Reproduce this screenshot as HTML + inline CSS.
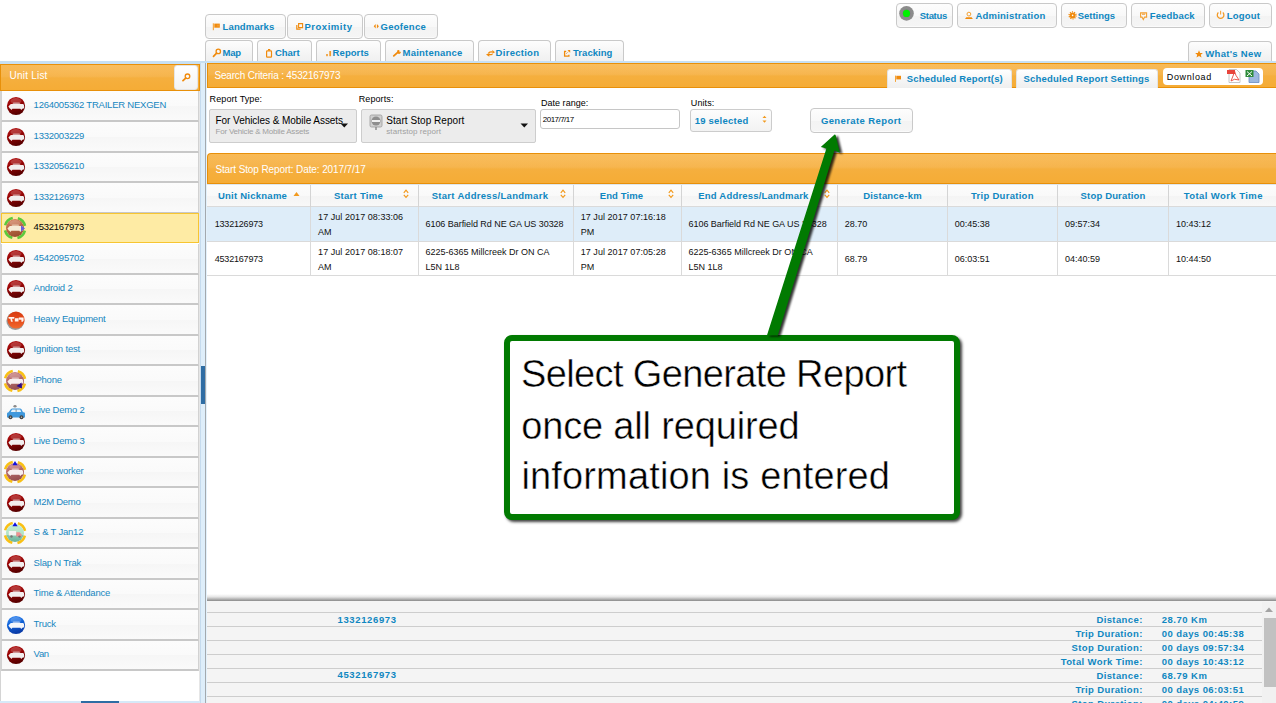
<!DOCTYPE html>
<html><head><meta charset="utf-8"><title>Reports</title>
<style>
html,body{margin:0;padding:0;}
body{width:1276px;height:703px;overflow:hidden;position:relative;background:#fff;font-family:"Liberation Sans",sans-serif;}
.a{position:absolute;}
.t{position:absolute;white-space:pre;}
</style></head><body>
<div class="a" style="left:205.0px;top:14.0px;width:81.0px;height:25.0px;border:1px solid #c9c9c9;border-radius:4px;background:linear-gradient(#fdfdfd,#f8f8f8 50%,#f3f3f3 51%,#f5f5f5);box-shadow:inset 0 -1px 0 #fbfbfb;box-sizing:border-box;"></div>
<span class="t" style="left:222.6px;top:22px;font-size:9.5px;line-height:9.5px;font-weight:bold;color:#0f87c1;letter-spacing:0.13px;">Landmarks</span>
<div class="a" style="left:287.0px;top:14.0px;width:76.0px;height:25.0px;border:1px solid #c9c9c9;border-radius:4px;background:linear-gradient(#fdfdfd,#f8f8f8 50%,#f3f3f3 51%,#f5f5f5);box-shadow:inset 0 -1px 0 #fbfbfb;box-sizing:border-box;"></div>
<span class="t" style="left:304.4px;top:22px;font-size:9.5px;line-height:9.5px;font-weight:bold;color:#0f87c1;letter-spacing:0.54px;">Proximity</span>
<div class="a" style="left:364.0px;top:14.0px;width:74.0px;height:25.0px;border:1px solid #c9c9c9;border-radius:4px;background:linear-gradient(#fdfdfd,#f8f8f8 50%,#f3f3f3 51%,#f5f5f5);box-shadow:inset 0 -1px 0 #fbfbfb;box-sizing:border-box;"></div>
<span class="t" style="left:380.6px;top:22px;font-size:9.5px;line-height:9.5px;font-weight:bold;color:#0f87c1;letter-spacing:0.26px;">Geofence</span>
<div class="a" style="left:205.0px;top:40.0px;width:48.0px;height:21.0px;border:1px solid #c9c9c9;border-bottom:none;border-radius:4px 4px 0 0;background:linear-gradient(#fdfdfd,#f6f6f6 50%,#f0f0f0);box-sizing:border-box;"></div>
<span class="t" style="left:222.6px;top:48px;font-size:9.5px;line-height:9.5px;font-weight:bold;color:#0f87c1;letter-spacing:-0.29px;">Map</span>
<div class="a" style="left:257.0px;top:40.0px;width:55.0px;height:21.0px;border:1px solid #c9c9c9;border-bottom:none;border-radius:4px 4px 0 0;background:linear-gradient(#fdfdfd,#f6f6f6 50%,#f0f0f0);box-sizing:border-box;"></div>
<span class="t" style="left:274.9px;top:48px;font-size:9.5px;line-height:9.5px;font-weight:bold;color:#0f87c1;letter-spacing:0.00px;">Chart</span>
<div class="a" style="left:316.0px;top:40.0px;width:65.0px;height:21.0px;border:1px solid #c9c9c9;border-bottom:none;border-radius:4px 4px 0 0;background:linear-gradient(#fdfdfd,#f6f6f6 50%,#f0f0f0);box-sizing:border-box;"></div>
<span class="t" style="left:332.6px;top:48px;font-size:9.5px;line-height:9.5px;font-weight:bold;color:#0f87c1;letter-spacing:0.07px;">Reports</span>
<div class="a" style="left:385.0px;top:40.0px;width:89.0px;height:21.0px;border:1px solid #c9c9c9;border-bottom:none;border-radius:4px 4px 0 0;background:linear-gradient(#fdfdfd,#f6f6f6 50%,#f0f0f0);box-sizing:border-box;"></div>
<span class="t" style="left:402.5px;top:48px;font-size:9.5px;line-height:9.5px;font-weight:bold;color:#0f87c1;letter-spacing:0.22px;">Maintenance</span>
<div class="a" style="left:478.0px;top:40.0px;width:73.0px;height:21.0px;border:1px solid #c9c9c9;border-bottom:none;border-radius:4px 4px 0 0;background:linear-gradient(#fdfdfd,#f6f6f6 50%,#f0f0f0);box-sizing:border-box;"></div>
<span class="t" style="left:495.6px;top:48px;font-size:9.5px;line-height:9.5px;font-weight:bold;color:#0f87c1;letter-spacing:0.28px;">Direction</span>
<div class="a" style="left:555.0px;top:40.0px;width:69.0px;height:21.0px;border:1px solid #c9c9c9;border-bottom:none;border-radius:4px 4px 0 0;background:linear-gradient(#fdfdfd,#f6f6f6 50%,#f0f0f0);box-sizing:border-box;"></div>
<span class="t" style="left:573.0px;top:48px;font-size:9.5px;line-height:9.5px;font-weight:bold;color:#0f87c1;letter-spacing:0.05px;">Tracking</span>
<div class="a" style="left:896.0px;top:3.0px;width:57.0px;height:25.0px;border:1px solid #c9c9c9;border-radius:4px;background:linear-gradient(#fdfdfd,#f8f8f8 50%,#f3f3f3 51%,#f5f5f5);box-shadow:inset 0 -1px 0 #fbfbfb;box-sizing:border-box;"></div>
<span class="t" style="left:919.8px;top:11px;font-size:9.5px;line-height:9.5px;font-weight:bold;color:#0f87c1;letter-spacing:-0.32px;">Status</span>
<div class="a" style="left:957.0px;top:3.0px;width:100.0px;height:25.0px;border:1px solid #c9c9c9;border-radius:4px;background:linear-gradient(#fdfdfd,#f8f8f8 50%,#f3f3f3 51%,#f5f5f5);box-shadow:inset 0 -1px 0 #fbfbfb;box-sizing:border-box;"></div>
<span class="t" style="left:975.4px;top:11px;font-size:9.5px;line-height:9.5px;font-weight:bold;color:#0f87c1;letter-spacing:0.22px;">Administration</span>
<div class="a" style="left:1061.0px;top:3.0px;width:66.0px;height:25.0px;border:1px solid #c9c9c9;border-radius:4px;background:linear-gradient(#fdfdfd,#f8f8f8 50%,#f3f3f3 51%,#f5f5f5);box-shadow:inset 0 -1px 0 #fbfbfb;box-sizing:border-box;"></div>
<span class="t" style="left:1077.8px;top:11px;font-size:9.5px;line-height:9.5px;font-weight:bold;color:#0f87c1;letter-spacing:-0.04px;">Settings</span>
<div class="a" style="left:1131.0px;top:3.0px;width:74.0px;height:25.0px;border:1px solid #c9c9c9;border-radius:4px;background:linear-gradient(#fdfdfd,#f8f8f8 50%,#f3f3f3 51%,#f5f5f5);box-shadow:inset 0 -1px 0 #fbfbfb;box-sizing:border-box;"></div>
<span class="t" style="left:1149.7px;top:11px;font-size:9.5px;line-height:9.5px;font-weight:bold;color:#0f87c1;letter-spacing:0.16px;">Feedback</span>
<div class="a" style="left:1209.0px;top:3.0px;width:63.0px;height:25.0px;border:1px solid #c9c9c9;border-radius:4px;background:linear-gradient(#fdfdfd,#f8f8f8 50%,#f3f3f3 51%,#f5f5f5);box-shadow:inset 0 -1px 0 #fbfbfb;box-sizing:border-box;"></div>
<span class="t" style="left:1226.8px;top:11px;font-size:9.5px;line-height:9.5px;font-weight:bold;color:#0f87c1;letter-spacing:0.17px;">Logout</span>
<div class="a" style="left:1188.0px;top:41.0px;width:84.0px;height:20.0px;border:1px solid #c9c9c9;border-bottom:none;border-radius:4px 4px 0 0;background:linear-gradient(#fdfdfd,#f6f6f6 50%,#f0f0f0);box-sizing:border-box;"></div>
<span class="t" style="left:1205.3px;top:49px;font-size:9.5px;line-height:9.5px;font-weight:bold;color:#0f87c1;letter-spacing:0.31px;">What's New</span>
<div class="a" style="left:0.0px;top:61.0px;width:1276.0px;height:2.0px;background:#c7e0f3;"></div>
<div class="a" style="left:0.0px;top:64.0px;width:200.0px;height:639.0px;background:#fff;"></div>
<div class="a" style="left:0.0px;top:61.0px;width:200.0px;height:3.0px;background:#c7e0f3;"></div>
<div class="a" style="left:0.0px;top:64.0px;width:200.0px;height:27.0px;background:radial-gradient(ellipse 70% 55% at 50% 0%,rgba(255,205,120,0.35),rgba(255,205,120,0) 100%),linear-gradient(#f7b752 0%,#f6b44c 45%,#f5af3e 52%,#f5ac36 100%);border-top:1px solid #e8900a;border-bottom:1px solid #e8900a;box-sizing:border-box;border-left:1px solid #e8900a;border-right:1px solid #e8900a;"></div>
<span class="t" style="left:9.5px;top:71px;font-size:10px;line-height:10px;font-weight:normal;color:#fff;letter-spacing:0.22px;">Unit List</span>
<div class="a" style="left:174.0px;top:65.0px;width:24.0px;height:25.0px;background:linear-gradient(#ffffff,#f3f3f3);border:1px solid #e5e5e5;border-radius:3px;box-sizing:border-box;"></div>
<div class="a" style="left:0.0px;top:91.0px;width:1.0px;height:612.0px;background:#d4d4d4;"></div>
<div class="a" style="left:198.5px;top:91.0px;width:1.5px;height:612.0px;background:#e6e6e6;"></div>
<div class="a" style="left:1.0px;top:91.0px;width:198.0px;height:31.0px;background:linear-gradient(#fcfcfc,#fafafa 50%,#f6f6f6 51%,#fafafa);border-left:1px solid #d2d2d2;border-right:1px solid #d2d2d2;border-bottom:2px solid #c8c8c8;box-sizing:border-box;"></div>
<span class="t" style="left:33.6px;top:100px;font-size:9.5px;line-height:9.5px;font-weight:normal;color:#1686c0;letter-spacing:-0.23px;">1264005362 TRAILER NEXGEN</span>
<svg class="a" style="left:3px;top:93.00px" width="26" height="26" viewBox="-13 -13 26 26"><circle r="9.1" fill="url(#gr)"/><ellipse cx="0" cy="-5" rx="5.5" ry="3" fill="#fff" opacity="0.18"/><path d="M-7.6 0.6 L-5.2 -1.9 H7 Q8.2 -1.7 8.2 0.4 Q8.2 2.6 7 2.8 H6.3 L5.3 3.9 L4.3 2.8 H-3.6 L-4.6 3.9 L-5.6 2.8 H-6 Z" fill="#f2eeee"/><path d="M-3.6 -1.9 L-2.6 -3.6 H3.4 L4.6 -1.9Z" fill="#f2eeee" opacity="0.55"/></svg>
<div class="a" style="left:1.0px;top:122.0px;width:198.0px;height:31.0px;background:linear-gradient(#fcfcfc,#fafafa 50%,#f6f6f6 51%,#fafafa);border-left:1px solid #d2d2d2;border-right:1px solid #d2d2d2;border-bottom:2px solid #c8c8c8;box-sizing:border-box;"></div>
<span class="t" style="left:33.6px;top:131px;font-size:9.5px;line-height:9.5px;font-weight:normal;color:#1686c0;letter-spacing:-0.23px;">1332003229</span>
<svg class="a" style="left:3px;top:124.00px" width="26" height="26" viewBox="-13 -13 26 26"><circle r="9.1" fill="url(#gr)"/><ellipse cx="0" cy="-5" rx="5.5" ry="3" fill="#fff" opacity="0.18"/><path d="M-7.6 0.6 L-5.2 -1.9 H7 Q8.2 -1.7 8.2 0.4 Q8.2 2.6 7 2.8 H6.3 L5.3 3.9 L4.3 2.8 H-3.6 L-4.6 3.9 L-5.6 2.8 H-6 Z" fill="#f2eeee"/><path d="M-3.6 -1.9 L-2.6 -3.6 H3.4 L4.6 -1.9Z" fill="#f2eeee" opacity="0.55"/></svg>
<div class="a" style="left:1.0px;top:153.0px;width:198.0px;height:30.0px;background:linear-gradient(#fcfcfc,#fafafa 50%,#f6f6f6 51%,#fafafa);border-left:1px solid #d2d2d2;border-right:1px solid #d2d2d2;border-bottom:2px solid #c8c8c8;box-sizing:border-box;"></div>
<span class="t" style="left:33.6px;top:161px;font-size:9.5px;line-height:9.5px;font-weight:normal;color:#1686c0;letter-spacing:-0.23px;">1332056210</span>
<svg class="a" style="left:3px;top:154.00px" width="26" height="26" viewBox="-13 -13 26 26"><circle r="9.1" fill="url(#gr)"/><ellipse cx="0" cy="-5" rx="5.5" ry="3" fill="#fff" opacity="0.18"/><path d="M-7.6 0.6 L-5.2 -1.9 H7 Q8.2 -1.7 8.2 0.4 Q8.2 2.6 7 2.8 H6.3 L5.3 3.9 L4.3 2.8 H-3.6 L-4.6 3.9 L-5.6 2.8 H-6 Z" fill="#f2eeee"/><path d="M-3.6 -1.9 L-2.6 -3.6 H3.4 L4.6 -1.9Z" fill="#f2eeee" opacity="0.55"/></svg>
<div class="a" style="left:1.0px;top:183.0px;width:198.0px;height:31.0px;background:linear-gradient(#fcfcfc,#fafafa 50%,#f6f6f6 51%,#fafafa);border-left:1px solid #d2d2d2;border-right:1px solid #d2d2d2;border-bottom:2px solid #c8c8c8;box-sizing:border-box;"></div>
<span class="t" style="left:33.6px;top:192px;font-size:9.5px;line-height:9.5px;font-weight:normal;color:#1686c0;letter-spacing:-0.23px;">1332126973</span>
<svg class="a" style="left:3px;top:185.00px" width="26" height="26" viewBox="-13 -13 26 26"><circle r="9.1" fill="url(#gr)"/><ellipse cx="0" cy="-5" rx="5.5" ry="3" fill="#fff" opacity="0.18"/><path d="M-7.6 0.6 L-5.2 -1.9 H7 Q8.2 -1.7 8.2 0.4 Q8.2 2.6 7 2.8 H6.3 L5.3 3.9 L4.3 2.8 H-3.6 L-4.6 3.9 L-5.6 2.8 H-6 Z" fill="#f2eeee"/><path d="M-3.6 -1.9 L-2.6 -3.6 H3.4 L4.6 -1.9Z" fill="#f2eeee" opacity="0.55"/></svg>
<div class="a" style="left:1.0px;top:213.0px;width:198.0px;height:30.0px;background:#feeba4;border:1px solid #f7c531;box-sizing:border-box;"></div>
<span class="t" style="left:33.6px;top:222px;font-size:9.5px;line-height:9.5px;font-weight:normal;color:#000;letter-spacing:-0.23px;">4532167973</span>
<svg class="a" style="left:2.3000000000000007px;top:215.00px" width="26" height="26" viewBox="-13 -13 26 26"><circle r="10.2" fill="none" stroke="#5cc93c" stroke-width="2.6" stroke-dasharray="10.8 5.22" stroke-dashoffset="13.4"/><circle r="9" fill="url(#gs)"/><ellipse cx="0" cy="-5" rx="5.5" ry="3" fill="#fff" opacity="0.18"/><path d="M-7.6 0.6 L-5.2 -1.9 H7 Q8.2 -1.7 8.2 0.4 Q8.2 2.6 7 2.8 H6.3 L5.3 3.9 L4.3 2.8 H-3.6 L-4.6 3.9 L-5.6 2.8 H-6 Z" fill="#f6ecd6"/><path d="M-3.6 -1.9 L-2.6 -3.6 H3.4 L4.6 -1.9Z" fill="#f6ecd6" opacity="0.55"/><path d="M6 -2.8 L10 0.5 L6 3.5Z" fill="#6a5ce0"/></svg>
<div class="a" style="left:1.0px;top:244.0px;width:198.0px;height:31.0px;background:linear-gradient(#fcfcfc,#fafafa 50%,#f6f6f6 51%,#fafafa);border-left:1px solid #d2d2d2;border-right:1px solid #d2d2d2;border-bottom:2px solid #c8c8c8;box-sizing:border-box;"></div>
<span class="t" style="left:33.6px;top:253px;font-size:9.5px;line-height:9.5px;font-weight:normal;color:#1686c0;letter-spacing:-0.23px;">4542095702</span>
<svg class="a" style="left:3px;top:246.00px" width="26" height="26" viewBox="-13 -13 26 26"><circle r="9.1" fill="url(#gr)"/><ellipse cx="0" cy="-5" rx="5.5" ry="3" fill="#fff" opacity="0.18"/><path d="M-7.6 0.6 L-5.2 -1.9 H7 Q8.2 -1.7 8.2 0.4 Q8.2 2.6 7 2.8 H6.3 L5.3 3.9 L4.3 2.8 H-3.6 L-4.6 3.9 L-5.6 2.8 H-6 Z" fill="#f2eeee"/><path d="M-3.6 -1.9 L-2.6 -3.6 H3.4 L4.6 -1.9Z" fill="#f2eeee" opacity="0.55"/></svg>
<div class="a" style="left:1.0px;top:275.0px;width:198.0px;height:30.0px;background:linear-gradient(#fcfcfc,#fafafa 50%,#f6f6f6 51%,#fafafa);border-left:1px solid #d2d2d2;border-right:1px solid #d2d2d2;border-bottom:2px solid #c8c8c8;box-sizing:border-box;"></div>
<span class="t" style="left:33.6px;top:283px;font-size:9.5px;line-height:9.5px;font-weight:normal;color:#1686c0;letter-spacing:-0.20px;">Android 2</span>
<svg class="a" style="left:3px;top:276.00px" width="26" height="26" viewBox="-13 -13 26 26"><circle r="9.1" fill="url(#gr)"/><ellipse cx="0" cy="-5" rx="5.5" ry="3" fill="#fff" opacity="0.18"/><path d="M-7.6 0.6 L-5.2 -1.9 H7 Q8.2 -1.7 8.2 0.4 Q8.2 2.6 7 2.8 H6.3 L5.3 3.9 L4.3 2.8 H-3.6 L-4.6 3.9 L-5.6 2.8 H-6 Z" fill="#f2eeee"/><path d="M-3.6 -1.9 L-2.6 -3.6 H3.4 L4.6 -1.9Z" fill="#f2eeee" opacity="0.55"/></svg>
<div class="a" style="left:1.0px;top:305.0px;width:198.0px;height:31.0px;background:linear-gradient(#fcfcfc,#fafafa 50%,#f6f6f6 51%,#fafafa);border-left:1px solid #d2d2d2;border-right:1px solid #d2d2d2;border-bottom:2px solid #c8c8c8;box-sizing:border-box;"></div>
<span class="t" style="left:33.6px;top:314px;font-size:9.5px;line-height:9.5px;font-weight:normal;color:#1686c0;letter-spacing:-0.21px;">Heavy Equipment</span>
<svg class="a" style="left:3px;top:307.00px" width="26" height="26" viewBox="-13 -13 26 26"><circle cx="-0.6" cy="0.9" r="9" fill="#3a3a3a" opacity="0.5"/><circle r="8.6" fill="url(#go)"/><path d="M-7.6 -3 H-1.5 L-2 -1.2 H-4 L-3.2 1.8 H-5 L-5.6 -1.2 H-7.2Z M-1.2 -1.8 H2.5 V1.4 H-1.2Z M2.8 -2.6 H7.6 V0.6 L6.8 1.8 H5.4 V-0.2 H2.8Z" fill="#fff3ee"/></svg>
<div class="a" style="left:1.0px;top:336.0px;width:198.0px;height:30.0px;background:linear-gradient(#fcfcfc,#fafafa 50%,#f6f6f6 51%,#fafafa);border-left:1px solid #d2d2d2;border-right:1px solid #d2d2d2;border-bottom:2px solid #c8c8c8;box-sizing:border-box;"></div>
<span class="t" style="left:33.6px;top:344px;font-size:9.5px;line-height:9.5px;font-weight:normal;color:#1686c0;letter-spacing:-0.16px;">Ignition test</span>
<svg class="a" style="left:3px;top:337.00px" width="26" height="26" viewBox="-13 -13 26 26"><circle r="9.1" fill="url(#gr)"/><ellipse cx="0" cy="-5" rx="5.5" ry="3" fill="#fff" opacity="0.18"/><path d="M-7.6 0.6 L-5.2 -1.9 H7 Q8.2 -1.7 8.2 0.4 Q8.2 2.6 7 2.8 H6.3 L5.3 3.9 L4.3 2.8 H-3.6 L-4.6 3.9 L-5.6 2.8 H-6 Z" fill="#f2eeee"/><path d="M-3.6 -1.9 L-2.6 -3.6 H3.4 L4.6 -1.9Z" fill="#f2eeee" opacity="0.55"/></svg>
<div class="a" style="left:1.0px;top:366.0px;width:198.0px;height:31.0px;background:linear-gradient(#fcfcfc,#fafafa 50%,#f6f6f6 51%,#fafafa);border-left:1px solid #d2d2d2;border-right:1px solid #d2d2d2;border-bottom:2px solid #c8c8c8;box-sizing:border-box;"></div>
<span class="t" style="left:33.6px;top:375px;font-size:9.5px;line-height:9.5px;font-weight:normal;color:#1686c0;letter-spacing:-0.24px;">iPhone</span>
<svg class="a" style="left:2.3000000000000007px;top:368.00px" width="26" height="26" viewBox="-13 -13 26 26"><circle r="10.2" fill="none" stroke="#f9c015" stroke-width="2.6" stroke-dasharray="10.8 5.22" stroke-dashoffset="13.4"/><circle r="9" fill="url(#gp)"/><ellipse cx="0" cy="-5" rx="5.5" ry="3" fill="#fff" opacity="0.18"/><path d="M-7.6 0.6 L-5.2 -1.9 H7 Q8.2 -1.7 8.2 0.4 Q8.2 2.6 7 2.8 H6.3 L5.3 3.9 L4.3 2.8 H-3.6 L-4.6 3.9 L-5.6 2.8 H-6 Z" fill="#f7efef"/><path d="M-3.6 -1.9 L-2.6 -3.6 H3.4 L4.6 -1.9Z" fill="#f7efef" opacity="0.55"/><path d="M1.5 5 L6.5 1.5 L7 7.5Z" fill="#2a0a8c"/></svg>
<div class="a" style="left:1.0px;top:397.0px;width:198.0px;height:30.0px;background:linear-gradient(#fcfcfc,#fafafa 50%,#f6f6f6 51%,#fafafa);border-left:1px solid #d2d2d2;border-right:1px solid #d2d2d2;border-bottom:2px solid #c8c8c8;box-sizing:border-box;"></div>
<span class="t" style="left:33.6px;top:405px;font-size:9.5px;line-height:9.5px;font-weight:normal;color:#1686c0;letter-spacing:-0.21px;">Live Demo 2</span>
<svg class="a" style="left:3px;top:398.00px" width="26" height="26" viewBox="-13 -13 26 26"><path d="M-9 6.5 V2.5 Q-9 1.5 -7.5 1.3 L-5 -2 Q-4.5 -2.6 -3.5 -2.6 H4 Q5 -2.6 5.5 -1.8 L7 1.3 H8 Q9 1.5 9 2.5 V6.5Z" fill="#3f98dc"/><path d="M-4 -1.6 H4.2 L5.2 0.9 H-5.2Z" fill="#e4f2fb"/><rect x="-0.3" y="-1.6" width="0.8" height="2.5" fill="#777"/><circle cx="-5.5" cy="6.3" r="2" fill="#444"/><circle cx="-5.5" cy="6.3" r="0.7" fill="#bbb"/><circle cx="5.5" cy="6.3" r="2" fill="#444"/><circle cx="5.5" cy="6.3" r="0.7" fill="#bbb"/><ellipse cx="-1" cy="-4.7" rx="1.6" ry="1.3" fill="#8a8a8a"/></svg>
<div class="a" style="left:1.0px;top:427.0px;width:198.0px;height:31.0px;background:linear-gradient(#fcfcfc,#fafafa 50%,#f6f6f6 51%,#fafafa);border-left:1px solid #d2d2d2;border-right:1px solid #d2d2d2;border-bottom:2px solid #c8c8c8;box-sizing:border-box;"></div>
<span class="t" style="left:33.6px;top:436px;font-size:9.5px;line-height:9.5px;font-weight:normal;color:#1686c0;letter-spacing:-0.21px;">Live Demo 3</span>
<svg class="a" style="left:3px;top:429.00px" width="26" height="26" viewBox="-13 -13 26 26"><circle r="9.1" fill="url(#gr)"/><ellipse cx="0" cy="-5" rx="5.5" ry="3" fill="#fff" opacity="0.18"/><path d="M-7.6 0.6 L-5.2 -1.9 H7 Q8.2 -1.7 8.2 0.4 Q8.2 2.6 7 2.8 H6.3 L5.3 3.9 L4.3 2.8 H-3.6 L-4.6 3.9 L-5.6 2.8 H-6 Z" fill="#f2eeee"/><path d="M-3.6 -1.9 L-2.6 -3.6 H3.4 L4.6 -1.9Z" fill="#f2eeee" opacity="0.55"/></svg>
<div class="a" style="left:1.0px;top:458.0px;width:198.0px;height:30.0px;background:linear-gradient(#fcfcfc,#fafafa 50%,#f6f6f6 51%,#fafafa);border-left:1px solid #d2d2d2;border-right:1px solid #d2d2d2;border-bottom:2px solid #c8c8c8;box-sizing:border-box;"></div>
<span class="t" style="left:33.6px;top:466px;font-size:9.5px;line-height:9.5px;font-weight:normal;color:#1686c0;letter-spacing:-0.21px;">Lone worker</span>
<svg class="a" style="left:2.3000000000000007px;top:459.00px" width="26" height="26" viewBox="-13 -13 26 26"><circle r="10.2" fill="none" stroke="#f9c015" stroke-width="2.6" stroke-dasharray="10.8 5.22" stroke-dashoffset="13.4"/><circle r="9" fill="url(#gp)"/><ellipse cx="0" cy="-5" rx="5.5" ry="3" fill="#fff" opacity="0.18"/><path d="M-7.6 0.6 L-5.2 -1.9 H7 Q8.2 -1.7 8.2 0.4 Q8.2 2.6 7 2.8 H6.3 L5.3 3.9 L4.3 2.8 H-3.6 L-4.6 3.9 L-5.6 2.8 H-6 Z" fill="#f7efef"/><path d="M-3.6 -1.9 L-2.6 -3.6 H3.4 L4.6 -1.9Z" fill="#f7efef" opacity="0.55"/><path d="M-2.6 -6.8 H2.6 L0 -11Z" fill="#1010e0"/></svg>
<div class="a" style="left:1.0px;top:488.0px;width:198.0px;height:31.0px;background:linear-gradient(#fcfcfc,#fafafa 50%,#f6f6f6 51%,#fafafa);border-left:1px solid #d2d2d2;border-right:1px solid #d2d2d2;border-bottom:2px solid #c8c8c8;box-sizing:border-box;"></div>
<span class="t" style="left:33.6px;top:497px;font-size:9.5px;line-height:9.5px;font-weight:normal;color:#1686c0;letter-spacing:-0.28px;">M2M Demo</span>
<svg class="a" style="left:3px;top:490.00px" width="26" height="26" viewBox="-13 -13 26 26"><circle r="9.1" fill="url(#gr)"/><ellipse cx="0" cy="-5" rx="5.5" ry="3" fill="#fff" opacity="0.18"/><path d="M-7.6 0.6 L-5.2 -1.9 H7 Q8.2 -1.7 8.2 0.4 Q8.2 2.6 7 2.8 H6.3 L5.3 3.9 L4.3 2.8 H-3.6 L-4.6 3.9 L-5.6 2.8 H-6 Z" fill="#f2eeee"/><path d="M-3.6 -1.9 L-2.6 -3.6 H3.4 L4.6 -1.9Z" fill="#f2eeee" opacity="0.55"/></svg>
<div class="a" style="left:1.0px;top:519.0px;width:198.0px;height:30.0px;background:linear-gradient(#fcfcfc,#fafafa 50%,#f6f6f6 51%,#fafafa);border-left:1px solid #d2d2d2;border-right:1px solid #d2d2d2;border-bottom:2px solid #c8c8c8;box-sizing:border-box;"></div>
<span class="t" style="left:33.6px;top:527px;font-size:9.5px;line-height:9.5px;font-weight:normal;color:#1686c0;letter-spacing:-0.21px;">S &amp; T Jan12</span>
<svg class="a" style="left:2.3000000000000007px;top:520.00px" width="26" height="26" viewBox="-13 -13 26 26"><circle r="10.2" fill="none" stroke="#f9c015" stroke-width="2.6" stroke-dasharray="10.8 5.22" stroke-dashoffset="13.4"/><defs><linearGradient id="gt" x1="0" y1="0" x2="0" y2="1"><stop offset="0" stop-color="#c4ecd2"/><stop offset="0.6" stop-color="#b0e2c4"/><stop offset="0.62" stop-color="#88c8b0"/><stop offset="1" stop-color="#6ab49c"/></linearGradient></defs><circle r="9" fill="url(#gt)"/><rect x="-6.2" y="-2" width="7.3" height="4.5" fill="#f3f3f3"/><path d="M1.3 -0.8 H4.5 L6.7 1.5 V3.6 H1.3Z" fill="#f09090"/><circle cx="-3.5" cy="3.5" r="1.2" fill="#777"/><circle cx="4.5" cy="3.6" r="1.2" fill="#777"/><path d="M-2.6 -6.8 H2.6 L0 -10.8Z" fill="#1010e0"/></svg>
<div class="a" style="left:1.0px;top:549.0px;width:198.0px;height:31.0px;background:linear-gradient(#fcfcfc,#fafafa 50%,#f6f6f6 51%,#fafafa);border-left:1px solid #d2d2d2;border-right:1px solid #d2d2d2;border-bottom:2px solid #c8c8c8;box-sizing:border-box;"></div>
<span class="t" style="left:33.6px;top:558px;font-size:9.5px;line-height:9.5px;font-weight:normal;color:#1686c0;letter-spacing:-0.20px;">Slap N Trak</span>
<svg class="a" style="left:3px;top:551.00px" width="26" height="26" viewBox="-13 -13 26 26"><circle r="9.1" fill="url(#gr)"/><ellipse cx="0" cy="-5" rx="5.5" ry="3" fill="#fff" opacity="0.18"/><path d="M-7.6 0.6 L-5.2 -1.9 H7 Q8.2 -1.7 8.2 0.4 Q8.2 2.6 7 2.8 H6.3 L5.3 3.9 L4.3 2.8 H-3.6 L-4.6 3.9 L-5.6 2.8 H-6 Z" fill="#f2eeee"/><path d="M-3.6 -1.9 L-2.6 -3.6 H3.4 L4.6 -1.9Z" fill="#f2eeee" opacity="0.55"/></svg>
<div class="a" style="left:1.0px;top:580.0px;width:198.0px;height:30.0px;background:linear-gradient(#fcfcfc,#fafafa 50%,#f6f6f6 51%,#fafafa);border-left:1px solid #d2d2d2;border-right:1px solid #d2d2d2;border-bottom:2px solid #c8c8c8;box-sizing:border-box;"></div>
<span class="t" style="left:33.6px;top:588px;font-size:9.5px;line-height:9.5px;font-weight:normal;color:#1686c0;letter-spacing:-0.20px;">Time &amp; Attendance</span>
<svg class="a" style="left:3px;top:581.00px" width="26" height="26" viewBox="-13 -13 26 26"><circle r="9.1" fill="url(#gr)"/><ellipse cx="0" cy="-5" rx="5.5" ry="3" fill="#fff" opacity="0.18"/><path d="M-7.6 0.6 L-5.2 -1.9 H7 Q8.2 -1.7 8.2 0.4 Q8.2 2.6 7 2.8 H6.3 L5.3 3.9 L4.3 2.8 H-3.6 L-4.6 3.9 L-5.6 2.8 H-6 Z" fill="#f2eeee"/><path d="M-3.6 -1.9 L-2.6 -3.6 H3.4 L4.6 -1.9Z" fill="#f2eeee" opacity="0.55"/></svg>
<div class="a" style="left:1.0px;top:610.0px;width:198.0px;height:31.0px;background:linear-gradient(#fcfcfc,#fafafa 50%,#f6f6f6 51%,#fafafa);border-left:1px solid #d2d2d2;border-right:1px solid #d2d2d2;border-bottom:2px solid #c8c8c8;box-sizing:border-box;"></div>
<span class="t" style="left:33.6px;top:619px;font-size:9.5px;line-height:9.5px;font-weight:normal;color:#1686c0;letter-spacing:-0.23px;">Truck</span>
<svg class="a" style="left:3px;top:612.00px" width="26" height="26" viewBox="-13 -13 26 26"><circle r="9.1" fill="url(#gb)"/><ellipse cx="0" cy="-5" rx="5.5" ry="3" fill="#fff" opacity="0.18"/><path d="M-7.6 0.6 L-5.2 -1.9 H7 Q8.2 -1.7 8.2 0.4 Q8.2 2.6 7 2.8 H6.3 L5.3 3.9 L4.3 2.8 H-3.6 L-4.6 3.9 L-5.6 2.8 H-6 Z" fill="#f4f6fb"/><path d="M-3.6 -1.9 L-2.6 -3.6 H3.4 L4.6 -1.9Z" fill="#f4f6fb" opacity="0.55"/></svg>
<div class="a" style="left:1.0px;top:641.0px;width:198.0px;height:30.0px;background:linear-gradient(#fcfcfc,#fafafa 50%,#f6f6f6 51%,#fafafa);border-left:1px solid #d2d2d2;border-right:1px solid #d2d2d2;border-bottom:2px solid #c8c8c8;box-sizing:border-box;"></div>
<span class="t" style="left:33.6px;top:649px;font-size:9.5px;line-height:9.5px;font-weight:normal;color:#1686c0;letter-spacing:-0.32px;">Van</span>
<svg class="a" style="left:3px;top:642.00px" width="26" height="26" viewBox="-13 -13 26 26"><circle r="9.1" fill="url(#gr)"/><ellipse cx="0" cy="-5" rx="5.5" ry="3" fill="#fff" opacity="0.18"/><path d="M-7.6 0.6 L-5.2 -1.9 H7 Q8.2 -1.7 8.2 0.4 Q8.2 2.6 7 2.8 H6.3 L5.3 3.9 L4.3 2.8 H-3.6 L-4.6 3.9 L-5.6 2.8 H-6 Z" fill="#f2eeee"/><path d="M-3.6 -1.9 L-2.6 -3.6 H3.4 L4.6 -1.9Z" fill="#f2eeee" opacity="0.55"/></svg>
<svg width="0" height="0" style="position:absolute"><defs><linearGradient id="gr" x1="0" y1="0" x2="0.3" y2="1"><stop offset="0" stop-color="#b41818"/><stop offset="0.45" stop-color="#9a0505"/><stop offset="1" stop-color="#5a0000"/></linearGradient><linearGradient id="gb" x1="0" y1="0" x2="0.3" y2="1"><stop offset="0" stop-color="#3d8ef5"/><stop offset="0.5" stop-color="#0f62d8"/><stop offset="1" stop-color="#0a3ca8"/></linearGradient><linearGradient id="go" x1="0" y1="0" x2="0" y2="1"><stop offset="0" stop-color="#d83a10"/><stop offset="0.6" stop-color="#e8501e"/><stop offset="1" stop-color="#f06a30"/></linearGradient><linearGradient id="gp" x1="0" y1="0" x2="0.3" y2="1"><stop offset="0" stop-color="#d08a8a"/><stop offset="0.5" stop-color="#b56a6a"/><stop offset="1" stop-color="#985050"/></linearGradient><linearGradient id="gs" x1="0" y1="0" x2="0.3" y2="1"><stop offset="0" stop-color="#d88a68"/><stop offset="0.5" stop-color="#bd6a48"/><stop offset="1" stop-color="#9c5232"/></linearGradient></defs></svg>
<div class="a" style="left:0.0px;top:701.0px;width:200.0px;height:2.0px;background:#d6e9f8;"></div>
<div class="a" style="left:80.5px;top:701.0px;width:38.5px;height:2.0px;background:#2e6da4;"></div>
<div class="a" style="left:200.0px;top:63.0px;width:5.0px;height:640.0px;background:linear-gradient(90deg,#c5dbee 0,#c5dbee 1px,#deeefa 1px);"></div>
<div class="a" style="left:201.0px;top:366.0px;width:4.0px;height:38.0px;background:#2e6da4;"></div>
<div class="a" style="left:205.0px;top:63.0px;width:1.0px;height:640.0px;background:#a3a9ae;"></div>
<div class="a" style="left:206.0px;top:63.0px;width:1.0px;height:640.0px;background:#e3f1fb;"></div>
<div class="a" style="left:207.0px;top:63.0px;width:1069.0px;height:640.0px;background:#fff;"></div>
<div class="a" style="left:207.0px;top:63.0px;width:1069.0px;height:25.0px;background:radial-gradient(ellipse 70% 55% at 50% 0%,rgba(255,205,120,0.35),rgba(255,205,120,0) 100%),linear-gradient(#f7b752 0%,#f6b44c 45%,#f5af3e 52%,#f5ac36 100%);border-top:1px solid #e8900a;border-bottom:1px solid #e8900a;box-sizing:border-box;border-left:1px solid #e8900a;"></div>
<span class="t" style="left:214.4px;top:71px;font-size:10px;line-height:10px;font-weight:normal;color:#fff;letter-spacing:-0.17px;">Search Criteria : 4532167973</span>
<div class="a" style="left:887.0px;top:69.0px;width:125.0px;height:19.0px;background:linear-gradient(#ffffff,#f6f6f6 50%,#efefef);border:1px solid #e3e3e3;border-bottom:none;border-radius:3px 3px 0 0;box-sizing:border-box;"></div>
<span class="t" style="left:906.8px;top:74px;font-size:9.5px;line-height:9.5px;font-weight:bold;color:#0f87c1;letter-spacing:0.17px;">Scheduled Report(s)</span>
<div class="a" style="left:1016.0px;top:69.0px;width:142.0px;height:19.0px;background:linear-gradient(#ffffff,#f6f6f6 50%,#efefef);border:1px solid #e3e3e3;border-bottom:none;border-radius:3px 3px 0 0;box-sizing:border-box;"></div>
<span class="t" style="left:1023.6px;top:74px;font-size:9.5px;line-height:9.5px;font-weight:bold;color:#0f87c1;letter-spacing:0.18px;">Scheduled Report Settings</span>
<div class="a" style="left:1163.0px;top:68.0px;width:100.0px;height:17.0px;background:#fff;border-radius:4px;"></div>
<span class="t" style="left:1166.8px;top:73px;font-size:9px;line-height:9px;font-weight:normal;color:#000;letter-spacing:0.63px;">Download</span>
<svg class="a" style="left:1226px;top:68px" width="16" height="16" viewBox="0 0 16 16"><path d="M3 1.5 H10.5 L14 5 V14.5 H3Z" fill="#fff" stroke="#b8b8b8" stroke-width="0.8"/><rect x="1" y="2" width="8" height="4" fill="#e8453c"/><path d="M5 13 Q8 6 8.5 3 Q9 7 13 12 Q8 10 5 13Z" fill="none" stroke="#e8453c" stroke-width="0.9"/></svg>
<svg class="a" style="left:1244px;top:68px" width="16" height="16" viewBox="0 0 16 16"><path d="M5 3 H12 L15 6 V14.5 H5Z" fill="#9cb8e0" stroke="#6a8cc0" stroke-width="0.8"/><rect x="1.5" y="2" width="8" height="7" fill="#2e8b3a"/><path d="M3 3.5 L8 8 M8 3.5 L3 8" stroke="#fff" stroke-width="1"/></svg>
<span class="t" style="left:209.6px;top:95px;font-size:9px;line-height:9px;font-weight:normal;color:#000;letter-spacing:0.10px;">Report Type:</span>
<span class="t" style="left:358.7px;top:95px;font-size:9px;line-height:9px;font-weight:normal;color:#000;letter-spacing:0.10px;">Reports:</span>
<span class="t" style="left:540.9px;top:99px;font-size:9px;line-height:9px;font-weight:normal;color:#000;letter-spacing:0.04px;">Date range:</span>
<span class="t" style="left:690.8px;top:99px;font-size:9px;line-height:9px;font-weight:normal;color:#000;letter-spacing:0.10px;">Units:</span>
<div class="a" style="left:209.0px;top:109.0px;width:148.0px;height:34.0px;background:#ececec;border:1px solid #cdcdcd;border-radius:2px;box-sizing:border-box;"></div>
<span class="t" style="left:215.5px;top:116px;font-size:10px;line-height:10px;font-weight:normal;color:#000;letter-spacing:-0.05px;">For Vehicles &amp; Mobile Assets</span>
<span class="t" style="left:215.5px;top:128px;font-size:8px;line-height:8px;font-weight:normal;color:#a0a0a0;letter-spacing:-0.21px;">For Vehicle &amp; Mobile Assets</span>
<svg class="a" style="left:340px;top:123px" width="9" height="5" viewBox="0 0 9 5"><path d="M0.5 0.5 H8 L4.25 4.5Z" fill="#111"/></svg>
<div class="a" style="left:361.0px;top:109.0px;width:175.0px;height:34.0px;background:#ececec;border:1px solid #cdcdcd;border-radius:2px;box-sizing:border-box;"></div>
<svg class="a" style="left:369px;top:114px" width="14" height="17" viewBox="0 0 14 17"><rect x="1" y="1" width="12" height="12" rx="1.5" fill="#d0d0d0" stroke="#9a9a9a" stroke-width="0.8"/><circle cx="7" cy="7" r="4.5" fill="#8e8e8e"/><rect x="3" y="6" width="8" height="2" fill="#f0f0f0"/><rect x="6.3" y="13" width="1.4" height="3" fill="#888"/></svg>
<span class="t" style="left:386.3px;top:116px;font-size:10px;line-height:10px;font-weight:normal;color:#000;letter-spacing:0.05px;">Start Stop Report</span>
<span class="t" style="left:386.3px;top:128px;font-size:8px;line-height:8px;font-weight:normal;color:#a0a0a0;letter-spacing:0.06px;">startstop report</span>
<svg class="a" style="left:519.5px;top:123px" width="9" height="5" viewBox="0 0 9 5"><path d="M0.5 0.5 H8 L4.25 4.5Z" fill="#111"/></svg>
<div class="a" style="left:540.0px;top:109.0px;width:140.0px;height:20.0px;background:#fff;border:1px solid #c6c6c6;border-radius:3px;box-sizing:border-box;"></div>
<span class="t" style="left:542.8px;top:116px;font-size:8px;line-height:8px;font-weight:normal;color:#000;letter-spacing:-0.53px;">2017/7/17</span>
<div class="a" style="left:690.0px;top:109.0px;width:82.0px;height:23.0px;background:linear-gradient(#fdfdfd,#f2f2f2);border:1px solid #cccccc;border-radius:3px;box-sizing:border-box;"></div>
<span class="t" style="left:694.7px;top:116px;font-size:9.5px;line-height:9.5px;font-weight:bold;color:#0f87c1;letter-spacing:0.23px;">19 selected</span>
<svg class="a" style="left:762px;top:115px" width="6" height="9" viewBox="0 0 6 9"><path d="M0.5 3 L2.5 0.8 L4.5 3Z M0.5 5.5 L2.5 7.7 L4.5 5.5Z" fill="#f29a1e"/></svg>
<div class="a" style="left:810.0px;top:108.0px;width:103.0px;height:25.0px;border:1px solid #c9c9c9;border-radius:4px;background:linear-gradient(#fdfdfd,#f8f8f8 50%,#f3f3f3 51%,#f5f5f5);box-shadow:inset 0 -1px 0 #fbfbfb;box-sizing:border-box;"></div>
<span class="t" style="left:820.9px;top:116px;font-size:9.5px;line-height:9.5px;font-weight:bold;color:#0f87c1;letter-spacing:0.40px;">Generate Report</span>
<div class="a" style="left:207.0px;top:153.0px;width:1069.0px;height:31.0px;background:radial-gradient(ellipse 70% 55% at 50% 0%,rgba(255,205,120,0.35),rgba(255,205,120,0) 100%),linear-gradient(#f7b752 0%,#f6b44c 45%,#f5af3e 52%,#f5ac36 100%);border-top:1px solid #e8900a;border-bottom:1px solid #e8900a;box-sizing:border-box;border-left:1px solid #e8900a;border-radius:4px 0 0 0;"></div>
<span class="t" style="left:215.4px;top:165px;font-size:10px;line-height:10px;font-weight:normal;color:#fff;letter-spacing:-0.11px;">Start Stop Report: Date: 2017/7/17</span>
<div class="a" style="left:207.0px;top:184.0px;width:1069.0px;height:23.0px;background:linear-gradient(#fcfcfc,#f9f9f9 50%,#f4f4f4 51%,#f8f8f8);border-top:1px solid #dde6ee;border-bottom:1px solid #dadada;box-sizing:border-box;"></div>
<div class="a" style="left:310.0px;top:185.0px;width:1.0px;height:22.0px;background:#d4d4d4;"></div>
<div class="a" style="left:418.0px;top:185.0px;width:1.0px;height:22.0px;background:#d4d4d4;"></div>
<div class="a" style="left:573.0px;top:185.0px;width:1.0px;height:22.0px;background:#d4d4d4;"></div>
<div class="a" style="left:681.0px;top:185.0px;width:1.0px;height:22.0px;background:#d4d4d4;"></div>
<div class="a" style="left:837.0px;top:185.0px;width:1.0px;height:22.0px;background:#d4d4d4;"></div>
<div class="a" style="left:947.0px;top:185.0px;width:1.0px;height:22.0px;background:#d4d4d4;"></div>
<div class="a" style="left:1057.0px;top:185.0px;width:1.0px;height:22.0px;background:#d4d4d4;"></div>
<div class="a" style="left:1168.0px;top:185.0px;width:1.0px;height:22.0px;background:#d4d4d4;"></div>
<span class="t" style="left:217.9px;top:191px;font-size:9.5px;line-height:9.5px;font-weight:bold;color:#0f87c1;letter-spacing:0.25px;">Unit Nickname</span>
<span class="t" style="left:333.9px;top:191px;font-size:9.5px;line-height:9.5px;font-weight:bold;color:#0f87c1;letter-spacing:0.29px;">Start Time</span>
<span class="t" style="left:431.7px;top:191px;font-size:9.5px;line-height:9.5px;font-weight:bold;color:#0f87c1;letter-spacing:0.30px;">Start Address/Landmark</span>
<span class="t" style="left:599.7px;top:191px;font-size:9.5px;line-height:9.5px;font-weight:bold;color:#0f87c1;letter-spacing:0.12px;">End Time</span>
<span class="t" style="left:698.3px;top:191px;font-size:9.5px;line-height:9.5px;font-weight:bold;color:#0f87c1;letter-spacing:0.20px;">End Address/Landmark</span>
<span class="t" style="left:863.2px;top:191px;font-size:9.5px;line-height:9.5px;font-weight:bold;color:#0f87c1;letter-spacing:0.19px;">Distance-km</span>
<span class="t" style="left:970.9px;top:191px;font-size:9.5px;line-height:9.5px;font-weight:bold;color:#0f87c1;letter-spacing:0.29px;">Trip Duration</span>
<span class="t" style="left:1080.6px;top:191px;font-size:9.5px;line-height:9.5px;font-weight:bold;color:#0f87c1;letter-spacing:0.16px;">Stop Duration</span>
<span class="t" style="left:1183.7px;top:191px;font-size:9.5px;line-height:9.5px;font-weight:bold;color:#0f87c1;letter-spacing:0.42px;">Total Work Time</span>
<svg class="a" style="left:293px;top:191px" width="8" height="6" viewBox="0 0 8 6"><path d="M0.5 5 L3.5 1 L6.5 5Z" fill="#f29a1e"/></svg>
<svg class="a" style="left:403px;top:189px" width="7" height="10" viewBox="0 0 7 10"><path d="M0.8 3.8 L3 1.2 L5.2 3.8 M0.8 5.8 L3 8.4 L5.2 5.8" fill="none" stroke="#f29a1e" stroke-width="1.2"/></svg>
<svg class="a" style="left:560px;top:189px" width="7" height="10" viewBox="0 0 7 10"><path d="M0.8 3.8 L3 1.2 L5.2 3.8 M0.8 5.8 L3 8.4 L5.2 5.8" fill="none" stroke="#f29a1e" stroke-width="1.2"/></svg>
<svg class="a" style="left:668px;top:189px" width="7" height="10" viewBox="0 0 7 10"><path d="M0.8 3.8 L3 1.2 L5.2 3.8 M0.8 5.8 L3 8.4 L5.2 5.8" fill="none" stroke="#f29a1e" stroke-width="1.2"/></svg>
<svg class="a" style="left:823.5px;top:189px" width="7" height="10" viewBox="0 0 7 10"><path d="M0.8 3.8 L3 1.2 L5.2 3.8 M0.8 5.8 L3 8.4 L5.2 5.8" fill="none" stroke="#f29a1e" stroke-width="1.2"/></svg>
<div class="a" style="left:207.0px;top:207.0px;width:1069.0px;height:35.0px;background:#deedf9;border-bottom:1px solid #dadada;box-sizing:border-box;"></div>
<div class="a" style="left:310.0px;top:207.0px;width:1.0px;height:69.0px;background:#dadada;"></div>
<div class="a" style="left:418.0px;top:207.0px;width:1.0px;height:69.0px;background:#dadada;"></div>
<div class="a" style="left:573.0px;top:207.0px;width:1.0px;height:69.0px;background:#dadada;"></div>
<div class="a" style="left:681.0px;top:207.0px;width:1.0px;height:69.0px;background:#dadada;"></div>
<div class="a" style="left:837.0px;top:207.0px;width:1.0px;height:69.0px;background:#dadada;"></div>
<div class="a" style="left:947.0px;top:207.0px;width:1.0px;height:69.0px;background:#dadada;"></div>
<div class="a" style="left:1057.0px;top:207.0px;width:1.0px;height:69.0px;background:#dadada;"></div>
<div class="a" style="left:1168.0px;top:207.0px;width:1.0px;height:69.0px;background:#dadada;"></div>
<div class="a" style="left:207.0px;top:275.0px;width:1069.0px;height:1.0px;background:#dadada;"></div>
<span class="t" style="left:214.7px;top:220px;font-size:9px;line-height:9px;font-weight:normal;color:#111;letter-spacing:-0.19px;">1332126973</span>
<span class="t" style="left:318.1px;top:213px;font-size:9px;line-height:9px;font-weight:normal;color:#111;letter-spacing:0.05px;">17 Jul 2017 08:33:06</span>
<span class="t" style="left:318.1px;top:228px;font-size:9px;line-height:9px;font-weight:normal;color:#111;letter-spacing:0.00px;">AM</span>
<span class="t" style="left:425.5px;top:220px;font-size:9px;line-height:9px;font-weight:normal;color:#111;letter-spacing:-0.05px;">6106 Barfield Rd NE GA US 30328</span>
<span class="t" style="left:580.7px;top:213px;font-size:9px;line-height:9px;font-weight:normal;color:#111;letter-spacing:0.05px;">17 Jul 2017 07:16:18</span>
<span class="t" style="left:580.7px;top:228px;font-size:9px;line-height:9px;font-weight:normal;color:#111;letter-spacing:0.00px;">PM</span>
<span class="t" style="left:688.6px;top:220px;font-size:9px;line-height:9px;font-weight:normal;color:#111;letter-spacing:-0.05px;">6106 Barfield Rd NE GA US 30328</span>
<span class="t" style="left:844.7px;top:220px;font-size:9px;line-height:9px;font-weight:normal;color:#111;letter-spacing:0.00px;">28.70</span>
<span class="t" style="left:954.8px;top:220px;font-size:9px;line-height:9px;font-weight:normal;color:#111;letter-spacing:0.00px;">00:45:38</span>
<span class="t" style="left:1064.9px;top:220px;font-size:9px;line-height:9px;font-weight:normal;color:#111;letter-spacing:0.00px;">09:57:34</span>
<span class="t" style="left:1176.0px;top:220px;font-size:9px;line-height:9px;font-weight:normal;color:#111;letter-spacing:0.00px;">10:43:12</span>
<span class="t" style="left:214.7px;top:255px;font-size:9px;line-height:9px;font-weight:normal;color:#111;letter-spacing:-0.19px;">4532167973</span>
<span class="t" style="left:318.1px;top:248px;font-size:9px;line-height:9px;font-weight:normal;color:#111;letter-spacing:0.05px;">17 Jul 2017 08:18:07</span>
<span class="t" style="left:318.1px;top:263px;font-size:9px;line-height:9px;font-weight:normal;color:#111;letter-spacing:0.00px;">AM</span>
<span class="t" style="left:425.5px;top:248px;font-size:9px;line-height:9px;font-weight:normal;color:#111;letter-spacing:0.00px;">6225-6365 Millcreek Dr ON CA</span>
<span class="t" style="left:425.5px;top:263px;font-size:9px;line-height:9px;font-weight:normal;color:#111;letter-spacing:0.00px;">L5N 1L8</span>
<span class="t" style="left:580.7px;top:248px;font-size:9px;line-height:9px;font-weight:normal;color:#111;letter-spacing:0.05px;">17 Jul 2017 07:05:28</span>
<span class="t" style="left:580.7px;top:263px;font-size:9px;line-height:9px;font-weight:normal;color:#111;letter-spacing:0.00px;">PM</span>
<span class="t" style="left:688.6px;top:248px;font-size:9px;line-height:9px;font-weight:normal;color:#111;letter-spacing:0.00px;">6225-6365 Millcreek Dr ON CA</span>
<span class="t" style="left:688.6px;top:263px;font-size:9px;line-height:9px;font-weight:normal;color:#111;letter-spacing:0.00px;">L5N 1L8</span>
<span class="t" style="left:844.7px;top:255px;font-size:9px;line-height:9px;font-weight:normal;color:#111;letter-spacing:0.00px;">68.79</span>
<span class="t" style="left:954.8px;top:255px;font-size:9px;line-height:9px;font-weight:normal;color:#111;letter-spacing:0.00px;">06:03:51</span>
<span class="t" style="left:1064.9px;top:255px;font-size:9px;line-height:9px;font-weight:normal;color:#111;letter-spacing:0.00px;">04:40:59</span>
<span class="t" style="left:1176.0px;top:255px;font-size:9px;line-height:9px;font-weight:normal;color:#111;letter-spacing:0.00px;">10:44:50</span>
<div class="a" style="left:207.0px;top:601.0px;width:1069.0px;height:102.0px;background:#f4f4f4;"></div>
<div class="a" style="left:207.0px;top:594.0px;width:1069.0px;height:7.0px;background:linear-gradient(rgba(255,255,255,0),#e6e6e6 40%,#b0b0b0 75%,#8a8a8a);"></div>
<div class="a" style="left:206.5px;top:612.0px;width:1055.5px;height:1.0px;background:#cdcdcd;"></div>
<div class="a" style="left:206.5px;top:626.0px;width:1055.5px;height:1.0px;background:#cdcdcd;"></div>
<div class="a" style="left:206.5px;top:640.0px;width:1055.5px;height:1.0px;background:#cdcdcd;"></div>
<div class="a" style="left:206.5px;top:654.0px;width:1055.5px;height:1.0px;background:#cdcdcd;"></div>
<div class="a" style="left:206.5px;top:668.0px;width:1055.5px;height:1.0px;background:#cdcdcd;"></div>
<div class="a" style="left:206.5px;top:682.0px;width:1055.5px;height:1.0px;background:#cdcdcd;"></div>
<div class="a" style="left:206.5px;top:696.0px;width:1055.5px;height:1.0px;background:#cdcdcd;"></div>
<span class="t" style="left:337.5px;top:615px;font-size:9.5px;line-height:9.5px;font-weight:bold;color:#0f87c1;letter-spacing:0.63px;">1332126973</span>
<span class="t" style="left:337.5px;top:670px;font-size:9.5px;line-height:9.5px;font-weight:bold;color:#0f87c1;letter-spacing:0.63px;">4532167973</span>
<span class="t" style="left:1096.4px;top:615px;font-size:9.5px;line-height:9.5px;font-weight:bold;color:#0f87c1;letter-spacing:0.40px;">Distance:</span>
<span class="t" style="left:1161.7px;top:615px;font-size:9.5px;line-height:9.5px;font-weight:bold;color:#0f87c1;letter-spacing:0.50px;">28.70 Km</span>
<span class="t" style="left:1075.4px;top:629px;font-size:9.5px;line-height:9.5px;font-weight:bold;color:#0f87c1;letter-spacing:0.36px;">Trip Duration:</span>
<span class="t" style="left:1161.7px;top:629px;font-size:9.5px;line-height:9.5px;font-weight:bold;color:#0f87c1;letter-spacing:0.43px;">00 days 00:45:38</span>
<span class="t" style="left:1071.5px;top:643px;font-size:9.5px;line-height:9.5px;font-weight:bold;color:#0f87c1;letter-spacing:0.38px;">Stop Duration:</span>
<span class="t" style="left:1161.7px;top:643px;font-size:9.5px;line-height:9.5px;font-weight:bold;color:#0f87c1;letter-spacing:0.43px;">00 days 09:57:34</span>
<span class="t" style="left:1060.7px;top:657px;font-size:9.5px;line-height:9.5px;font-weight:bold;color:#0f87c1;letter-spacing:0.38px;">Total Work Time:</span>
<span class="t" style="left:1161.7px;top:657px;font-size:9.5px;line-height:9.5px;font-weight:bold;color:#0f87c1;letter-spacing:0.43px;">00 days 10:43:12</span>
<span class="t" style="left:1096.4px;top:671px;font-size:9.5px;line-height:9.5px;font-weight:bold;color:#0f87c1;letter-spacing:0.40px;">Distance:</span>
<span class="t" style="left:1161.7px;top:671px;font-size:9.5px;line-height:9.5px;font-weight:bold;color:#0f87c1;letter-spacing:0.50px;">68.79 Km</span>
<span class="t" style="left:1075.4px;top:685px;font-size:9.5px;line-height:9.5px;font-weight:bold;color:#0f87c1;letter-spacing:0.36px;">Trip Duration:</span>
<span class="t" style="left:1161.7px;top:685px;font-size:9.5px;line-height:9.5px;font-weight:bold;color:#0f87c1;letter-spacing:0.43px;">00 days 06:03:51</span>
<span class="t" style="left:1071.5px;top:699px;font-size:9.5px;line-height:9.5px;font-weight:bold;color:#0f87c1;letter-spacing:0.38px;">Stop Duration:</span>
<span class="t" style="left:1161.7px;top:699px;font-size:9.5px;line-height:9.5px;font-weight:bold;color:#0f87c1;letter-spacing:0.43px;">00 days 04:40:59</span>
<div class="a" style="left:1262.0px;top:601.5px;width:14.0px;height:101.5px;background:#f1f1f1;"></div>
<svg class="a" style="left:1264px;top:606px" width="10" height="7" viewBox="0 0 10 7"><path d="M1 6 L5 1.5 L9 6Z" fill="#a3a3a3"/></svg>
<div class="a" style="left:1263.5px;top:618.0px;width:12.5px;height:68.5px;background:#c1c1c1;"></div>
<svg class="a" style="left:0;top:0" width="1276" height="703" viewBox="0 0 1276 703"><rect x="212.8" y="23.3" width="1.1" height="6.9" fill="#f5a338"/><path d="M214.3 23.6 H219.8 V27.7 H214.3Z" fill="#f08a0c"/><path d="M216.8 24.6 H219 V26.6 H216.8Z" fill="#f7a540" opacity="0.6"/><path d="M298.6 23.6 H302.6 V27.6 H298.6Z" fill="none" stroke="#f08a0c" stroke-width="1.1"/><path d="M296.8 25 V29.2 H300.6" fill="none" stroke="#f08a0c" stroke-width="1.2"/><path d="M375.7 23.9 L373.7 26.3 L375.7 28.4Z M376.9 23.9 L378.9 26.3 L376.9 28.4Z" fill="#f08a0c"/><circle cx="218.3" cy="51.4" r="2.2" fill="none" stroke="#f08a0c" stroke-width="1.3"/><path d="M216.6 53.2 L213.5 56.3" stroke="#f08a0c" stroke-width="1.7" stroke-linecap="round"/><rect x="266.6" y="50.9" width="4.9" height="6.3" rx="0.6" fill="none" stroke="#f08a0c" stroke-width="1.2"/><rect x="268" y="49" width="2.2" height="1.6" fill="#f08a0c"/><rect x="326.3" y="54" width="1.4" height="2.2" fill="#f08a0c"/><rect x="329.3" y="51" width="1.8" height="5.2" fill="#f39a28"/><path d="M393.8 55.9 L398.6 51.6" stroke="#f08a0c" stroke-width="1.8" stroke-linecap="round"/><path d="M397.3 50.3 Q398.8 49.4 399.6 50.7 L398.9 51.5 L399.8 52.3 L400.8 51.6 Q401.4 53.4 399.3 53.9 Q397.4 54 397.3 52.3Z" fill="#f08a0c"/><path d="M488.5 53 Q490 51.6 492.3 52 M492.5 54.3 Q490.5 54.8 488.3 54.6" fill="none" stroke="#f08a0c" stroke-width="1.3"/><path d="M492.3 49.9 L495 52.2 L492.3 53.8Z" fill="#f08a0c"/><path d="M489.3 52.9 L486 54.6 L489.3 56.8Z" fill="#f08a0c"/><path d="M566.2 51.4 H564.6 V56.1 H568.9 V54.7" fill="none" stroke="#f08a0c" stroke-width="1.3"/><path d="M567.5 50 H570.2 V52.7Z" fill="#f08a0c"/><path d="M566.3 53.6 L568.9 51.3" stroke="#f08a0c" stroke-width="0.9" stroke-dasharray="1 0.6"/><circle cx="906.5" cy="13.4" r="7.3" fill="#8b8b8b"/><circle cx="906.5" cy="13.4" r="4.3" fill="#8c7d8c"/><circle cx="906.5" cy="13.4" r="3.6" fill="#00f000"/><circle cx="968.9" cy="14.1" r="1.9" fill="none" stroke="#f4a030" stroke-width="1"/><path d="M966.3 17.2 H971.6 L972.9 19.1 H965Z" fill="#f08a0c"/><circle cx="1072.6" cy="15.4" r="2.9" fill="#f08a0c"/><circle cx="1072.6" cy="15.4" r="3.5" fill="none" stroke="#f08a0c" stroke-width="1.3" stroke-dasharray="1.1 1.1"/><circle cx="1072.6" cy="15.4" r="0.8" fill="#fff"/><path d="M1140.6 12.9 H1146.6 V17.1 H1144.6 L1143.3 19.6 L1142 17.1 H1140.6Z" fill="none" stroke="#f3a030" stroke-width="1.1"/><path d="M1142 14.2 H1145.2" stroke="#f08a0c" stroke-width="0.9"/><path d="M1218.4 12.6 A3.3 3.3 0 1 0 1222.8 12.6" fill="none" stroke="#f39a26" stroke-width="1.3"/><path d="M1220.6 10.8 V14.6" stroke="#f5a43a" stroke-width="1.1"/><path d="M1199 50.2 L1200.1 52.9 L1202.9 53 L1200.8 54.8 L1201.5 57.6 L1199 56.1 L1196.5 57.6 L1197.2 54.8 L1195.1 53 L1197.9 52.9Z" fill="#f08a0c"/><circle cx="187.5" cy="76.3" r="2.3" fill="none" stroke="#f08a0c" stroke-width="1.3"/><path d="M185.7 78.2 L183 80.6" stroke="#f08a0c" stroke-width="1.8" stroke-linecap="round"/><rect x="895" y="75.6" width="1" height="6.3" fill="#f5a338"/><path d="M896.3 75.8 H901 V79.4 H896.3Z" fill="#f08a0c"/></svg>
<div class="a" style="left:504px;top:335px;width:456px;height:185px;border:6px solid #017a01;border-radius:8px;background:#fff;box-sizing:border-box;box-shadow:2px 2px 3px rgba(0,0,0,0.75);"></div>
<span class="t" style="left:521.0px;top:355px;font-size:38px;line-height:38px;font-weight:normal;color:#000;letter-spacing:-0.63px;-webkit-text-stroke:0.45px #fff;">Select Generate Report</span>
<span class="t" style="left:521.2px;top:407px;font-size:38px;line-height:38px;font-weight:normal;color:#000;letter-spacing:-0.16px;-webkit-text-stroke:0.45px #fff;">once all required</span>
<span class="t" style="left:521.5px;top:457px;font-size:38px;line-height:38px;font-weight:normal;color:#000;letter-spacing:0.14px;-webkit-text-stroke:0.45px #fff;">information is entered</span>
<svg class="a" style="left:0;top:0" width="1276" height="703" viewBox="0 0 1276 703"><defs><filter id="sh" x="-50%" y="-50%" width="200%" height="200%"><feGaussianBlur stdDeviation="1.3"/></filter></defs><g transform="translate(2.5,1.5)" filter="url(#sh)" opacity="0.8"><path d="M766.9 335 L826.4 148.4 L820.8 147 L834.6 134.4 Q835.3 134.3 835.6 135 L839.9 152.7 L834.4 150.5 L777.8 335Z" fill="#000"/></g><path d="M766.9 335.5 L826.4 148.4 L820.8 147 L834.6 134.4 Q835.3 134.3 835.6 135 L839.9 152.7 L834.4 150.5 L777.8 335.5Z" fill="#017a01"/></svg>
</body></html>
